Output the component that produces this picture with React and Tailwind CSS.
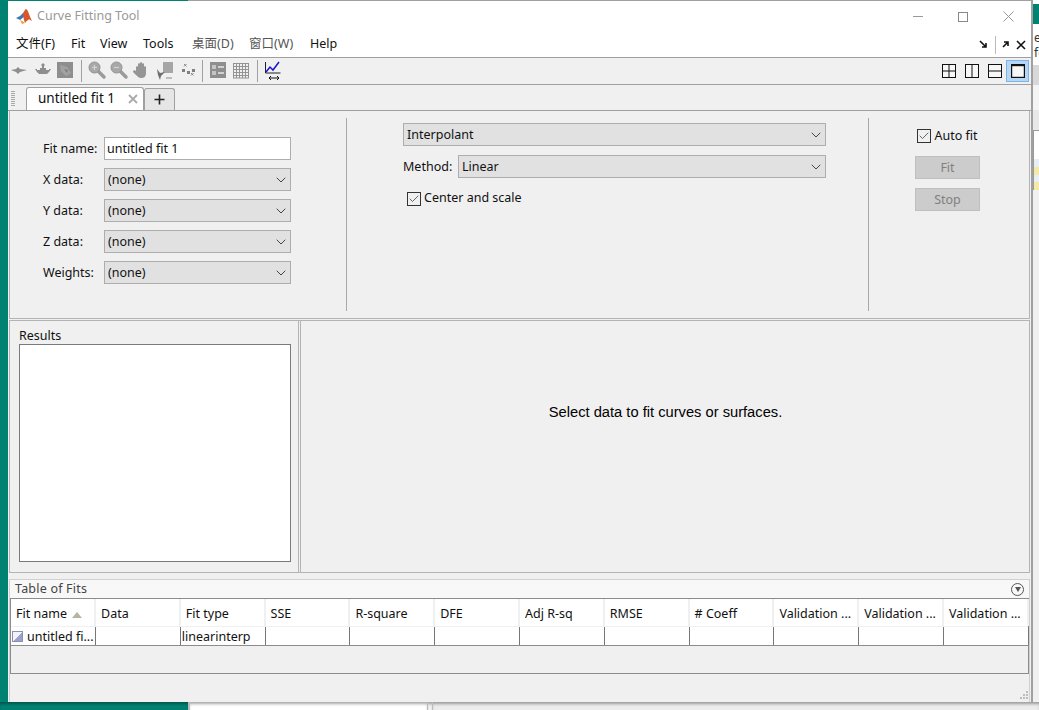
import { ChevronDown, Check } from "lucide-react";

const font = "font-['Noto_Sans','Open_Sans',sans-serif]";
const edgeShadow = "shadow-[inset_0_3px_3px_-1px_rgba(0,0,0,0.35)]";

function Combo({ text, className }) {
  return (
    <div className={`flex h-[23px] items-center justify-between border border-[#adadad] bg-[#e1e1e1] pl-[3px] pr-px ${className}`}>
      <span className="pt-[2px] leading-none">{text}</span>
      <ChevronDown size={16} strokeWidth={1.5} className="text-[#444]" />
    </div>
  );
}

function FieldRow({ label, children }) {
  return (
    <div className="flex h-[23px] items-center">
      <span className="w-[61px] pt-[2px] leading-none">{label}</span>
      {children}
    </div>
  );
}

function CheckBox() {
  return (
    <span className="flex h-[14px] w-[14px] items-center justify-center border border-[#333] bg-[#f0f0f0]">
      <Check size={12} strokeWidth={1.8} className="text-[#555]" />
    </span>
  );
}

function Sep() {
  return <span className="mx-[5px] h-[22px] w-px bg-[#a0a0a0]" />;
}

function ToolIcon({ children }) {
  return (
    <svg width="22" height="22" viewBox="0 0 22 22" className="shrink-0">
      {children}
    </svg>
  );
}

function Lens({ minus }) {
  return (
    <ToolIcon>
      <path d="M11 11l6 6" stroke="#9a9a9a" strokeWidth="3.5" strokeLinecap="round" />
      <circle cx="7.5" cy="7.5" r="5.5" fill="#a8a8a8" stroke="#929292" />
      <path d={minus ? "M5 7.5h5" : "M5 7.5h5M7.5 5v5"} stroke="#d4d4d4" strokeWidth="1.2" />
    </ToolIcon>
  );
}

function LayoutIcon({ v, h, active }) {
  return (
    <span className={`flex h-[22px] w-[23px] items-center justify-center ${active ? "border border-[#7eb4ea] bg-[#b5d7f3]" : ""}`}>
      <svg width="14" height="14" viewBox="0 0 14 14">
        <rect x="0.5" y="0.5" width="13" height="13" fill="#f7f7f7" stroke="#111" strokeWidth={active ? 1.4 : 1} />
        {active && <path d="M0 1.5h14" stroke="#111" strokeWidth="1.4" />}
        {v && <path d="M7 0v14" stroke="#111" />}
        {h && <path d="M0 7h14" stroke="#111" />}
      </svg>
    </span>
  );
}

const columns = ["Data", "Fit type", "SSE", "R-square", "DFE", "Adj R-sq", "RMSE", "# Coeff", "Validation ...", "Validation ...", "Validation ..."];

export default function App() {
  return (
    <div className={`flex h-[710px] w-[1039px] flex-col overflow-hidden bg-[#f7f7f7] text-[12.5px] text-[#111] ${font}`}>
      <div className="flex h-[702px]">
        <div className="w-2 bg-[#008272]" />

        <div className="flex w-[1023px] flex-col bg-[#f0f0f0]">
          {/* Top edge */}
          <div className="flex h-px">
            <div className="w-[180px] bg-[#008272]" />
            <div className="flex-1 bg-[#a0a0a0]" />
          </div>

          {/* Title bar */}
          <div className="flex h-[31px] items-center bg-white pl-[7px]">
            <svg width="18" height="18" viewBox="0 0 18 18">
              <path d="M1 10l4-2 3-3 2 3-5 4z" fill="#3c78b4" />
              <path d="M8 5c1-1 2-4 3-4 2 0 4 9 6 12-2-1-3-2-4-1-2 1-3 3-3 3-1-3-2-6-2-10z" fill="#d8562a" />
              <path d="M5 12c2 1 4 2 5 3l-3 1z" fill="#f09a3c" />
            </svg>
            <span className="ml-[4px] text-[12.5px] text-[#999]">Curve Fitting Tool</span>
            <div className="ml-auto flex items-center gap-[35px] pr-[17px] text-[#888]">
              <span className="h-px w-[10px] bg-[#999]" />
              <span className="h-[10px] w-[10px] border border-[#888]" />
              <svg width="11" height="11" viewBox="0 0 11 11"><path d="M0.5 0.5l10 10M10.5 0.5l-10 10" stroke="#999" /></svg>
            </div>
          </div>

          {/* Menu bar */}
          <div className="flex h-[26px] items-center border-b border-[#a0a0a0] bg-white pl-2 font-['Noto_Sans','Noto_Sans_CJK_SC',sans-serif]">
            <span className="w-[55px]">文件(F)</span>
            <span className="w-[29px]">Fit</span>
            <span className="w-[43px]">View</span>
            <span className="w-[49px]">Tools</span>
            <span className="w-[57px] text-[#555]">桌面(D)</span>
            <span className="w-[61px] text-[#555]">窗口(W)</span>
            <span>Help</span>
            <div className="ml-auto flex items-center pr-[5px]">
              <svg width="9" height="9" viewBox="0 0 9 9"><path d="M1 1l6 6M7 3v4H3" fill="none" stroke="#111" strokeWidth="1.6" /></svg>
              <span className="ml-[7px] mr-[5px] h-[18px] w-px bg-[#bbb]" />
              <svg width="9" height="9" viewBox="0 0 9 9"><path d="M2 7l5-5M3 2h4v4" fill="none" stroke="#111" strokeWidth="1.6" /></svg>
              <svg width="10" height="10" viewBox="0 0 10 10" className="ml-[6px]"><path d="M1 1l8 8M9 1l-8 8" stroke="#111" strokeWidth="1.6" /></svg>
            </div>
          </div>

          {/* Toolbar */}
          <div className="flex h-[27px] items-center border-b border-[#a0a0a0] px-[2px]">
            <div className="flex items-center">
              <ToolIcon><path d="M1 10l5-1 2-2 2 2 7 1-7 2-2 2-2-2z" fill="#8e8e8e" /></ToolIcon>
              <ToolIcon>
                <path d="M3 9h2v1h3V8h2V6l-1-1 2-2 2 2-1 1v2h2v2h3V9h2l-2 3-2 2H7l-2-2z" fill="#8e8e8e" />
              </ToolIcon>
              <ToolIcon>
                <rect x="3" y="2" width="16" height="16" fill="#8e8e8e" />
                <path d="M6 5l7 2 4 6-5 3-5-5z" fill="#a2a2a2" />
                <path d="M10 9l4 1-1 3z" fill="#7c7c7c" />
              </ToolIcon>
              <Sep />
              <Lens />
              <Lens minus />
              <ToolIcon><path d="M5 11V7c0-1 2-1 2 0V4c0-1 2-1 2 0V3c0-1 2-1 2 0v1c0-1 2-1 2 0v3c0-1 2-1 2 0v6c0 4-2 5-5 5-2 0-3-1-5-3l-3-3c0-2 2-2 3-1z" fill="#959595" /></ToolIcon>
              <ToolIcon>
                <rect x="10" y="2" width="10" height="11" fill="#a6a6a6" />
                <path d="M4 9l3 4 5-1-4 4-1 4-2-5z" fill="#6e6e6e" />
                <path d="M13 18h6" stroke="#888" />
              </ToolIcon>
              <ToolIcon>
                <g fill="#808080">
                  <rect x="7" y="9" width="3" height="3" />
                  <rect x="12" y="11" width="3" height="3" />
                  <rect x="17" y="9" width="3" height="3" />
                </g>
                <path d="M9 4l2.500 2.500M11.500 4L9 6.500M16 13l2.500 2.500M18.500 13L16 15.500" stroke="#888" />
              </ToolIcon>
              <Sep />
              <ToolIcon>
                <rect x="2" y="2" width="16" height="16" fill="#8e8e8e" />
                <path d="M4 5h4v4H4zM4 11h4v4H4z" fill="#c4c4c4" />
                <path d="M10 6h6v2h-6zM10 12h6v2h-6z" fill="#d0d0d0" />
              </ToolIcon>
              <ToolIcon>
                <path d="M3.500 3v15M6.500 3v15M9.500 3v15M12.500 3v15M15.500 3v15M18.500 3v15M3 3.500h16M3 6.500h16M3 9.500h16M3 12.500h16M3 15.500h16M3 18h16" stroke="#939393" />
              </ToolIcon>
              <Sep />
              <ToolIcon>
                <path d="M2.500 2v11h15" fill="none" stroke="#222" />
                <path d="M3 12l4-5 3 3 6-8" fill="none" stroke="#1414d0" strokeWidth="1.5" />
                <path d="M6 18h10M8 16l-2 2 2 2M14 16l2 2-2 2" fill="none" stroke="#111" />
              </ToolIcon>
            </div>
            <div className="ml-auto flex items-center">
              <LayoutIcon v h />
              <LayoutIcon v />
              <LayoutIcon h />
              <LayoutIcon active />
            </div>
          </div>

          {/* Tabs */}
          <div className="flex h-[26px] items-end border-b border-[#a0a0a0] pl-[3px]">
            <span className="mb-[4px] mr-[11px] h-[16px] w-[4px] bg-[repeating-linear-gradient(0deg,#aaa_0,#aaa_1px,transparent_1px,transparent_2px)]" />
            <div className="flex h-[23px] w-[118px] items-center justify-between rounded-t-[3px] border border-b-0 border-[#a0a0a0] bg-white pl-[11px] pr-[5px] text-[13.5px]">
              <span className="leading-none">untitled fit 1</span>
              <svg width="10" height="10" viewBox="0 0 10 10"><path d="M1 1l8 8M9 1l-8 8" stroke="#aaa" strokeWidth="1.8" /></svg>
            </div>
            <div className="flex h-[22px] w-[31px] items-center justify-center rounded-t-[3px] border border-b-0 border-[#a0a0a0] bg-[#e6e6e6]">
              <svg width="11" height="11" viewBox="0 0 11 11"><path d="M5.500 0.500v10M0.500 5.500h10" stroke="#222" strokeWidth="1.6" /></svg>
            </div>
          </div>

          {/* Fit options */}
          <div className="mx-px flex h-[208px] border-x border-b border-[#b4b4b4]">
            <div className="flex w-[336px] flex-col gap-[8px] pl-[33px] pt-[26px]">
              <FieldRow label="Fit name:">
                <div className="flex h-[23px] w-[187px] items-center border border-[#adadad] bg-white pl-[2px]">
                  <span className="pt-[2px] leading-none">untitled fit 1</span>
                </div>
              </FieldRow>
              <FieldRow label="X data:"><Combo text="(none)" className="w-[187px]" /></FieldRow>
              <FieldRow label="Y data:"><Combo text="(none)" className="w-[187px]" /></FieldRow>
              <FieldRow label="Z data:"><Combo text="(none)" className="w-[187px]" /></FieldRow>
              <FieldRow label="Weights:"><Combo text="(none)" className="w-[187px]" /></FieldRow>
            </div>
            <div className="my-[7px] w-px bg-[#a8a8a8]" />
            <div className="flex w-[521px] flex-col gap-[9px] pl-[56px] pt-[12px]">
              <Combo text="Interpolant" className="w-[423px]" />
              <div className="flex h-[23px] w-[423px] items-center">
                <span className="w-[55px] pt-[2px] leading-none">Method:</span>
                <Combo text="Linear" className="w-[368px]" />
              </div>
              <div className="mt-[5px] flex items-center gap-[3px] pl-[4px]">
                <CheckBox />
                <span className="pb-[2px] leading-none">Center and scale</span>
              </div>
            </div>
            <div className="my-[7px] w-px bg-[#a8a8a8]" />
            <div className="flex flex-1 flex-col items-center gap-[9px] pr-[3px] pt-[18px]">
              <div className="flex h-[14px] items-center gap-[3px]">
                <CheckBox />
                <span className="leading-none">Auto fit</span>
              </div>
              <div className="mt-[4px] flex h-[23px] w-[65px] items-center justify-center border border-[#bfbfbf] bg-[#cccccc] pt-px text-[#808080]">Fit</div>
              <div className="flex h-[23px] w-[65px] items-center justify-center border border-[#bfbfbf] bg-[#cccccc] pt-px text-[#808080]">Stop</div>
            </div>
          </div>

          {/* Results and plot */}
          <div className="mx-px mt-px flex h-[253px] gap-px border-x border-y border-[#b4b4b4]">
            <div className="flex w-[289px] flex-col border-r border-[#b4b4b4] px-[9px] pt-[7px]">
              <span className="h-[16px] pt-[2px] leading-none">Results</span>
              <div className="h-[218px] w-[272px] border border-[#7a7a7a] bg-white" />
            </div>
            <div className="flex flex-1 items-start justify-center border-l border-[#b4b4b4] pl-px pt-[80px] font-['Liberation_Sans',sans-serif] text-[14.7px] text-black">
              Select data to fit curves or surfaces.
            </div>
          </div>

          {/* Table of fits */}
          <div className="mx-px mt-[6px] flex flex-1 flex-col border-x border-t border-[#d0d0d0]">
            <div className="flex h-[18px] items-center justify-between bg-[#f8f8f8] px-[5px]">
              <span className="leading-none tracking-[0.2px] text-[#444]">Table of Fits</span>
              <span className="flex h-[13px] w-[13px] items-center justify-center rounded-full border border-[#555]">
                <span className="h-0 w-0 border-x-[3.5px] border-t-[5px] border-x-transparent border-t-[#555]" />
              </span>
            </div>
            <div className="h-[76px] w-[1019px] border border-[#8c8c8c]">
              <div className="grid h-[27px] grid-cols-[85px_repeat(11,84.8px)] bg-white">
                <div className="flex items-center gap-[5px] border-r-2 border-[#f0f0f0] pl-[5px] pt-[4px]">
                  Fit name
                  <span className="h-0 w-0 border-x-[5px] border-b-[6px] border-x-transparent border-b-[#b4b4a0]" />
                </div>
                {columns.map((col, i) => (
                  <div key={i} className="flex items-center whitespace-nowrap border-r-2 border-[#f0f0f0] pl-[5px] pt-[4px]">
                    {col}
                  </div>
                ))}
              </div>
              <div className="grid h-[20px] grid-cols-[85px_repeat(11,84.8px)] border-y border-b-[#8c8c8c] border-t-[#f0f0f0] bg-white">
                <div className="flex items-center gap-[4px] border-r border-[#777] pl-px">
                  <span className="h-[11px] w-[11px] border border-[#8a8fb0] bg-[linear-gradient(135deg,#f2f2f8_50%,#9aa3cf_50%)]" />
                  <span className="pt-[2px] leading-none">untitled fi...</span>
                </div>
                {columns.map((col, i) => (
                  <div key={i} className="flex items-center border-r border-[#777] pl-px pt-[2px] leading-none">
                    {i === 1 ? "linearinterp" : ""}
                  </div>
                ))}
              </div>
            </div>
            <div className="relative flex-1">
              <svg width="10" height="10" viewBox="0 0 10 10" className="absolute bottom-[2px] right-0">
                <g fill="#bdbdbd">
                  <rect x="7" y="1" width="2" height="2" />
                  <rect x="4" y="4" width="2" height="2" />
                  <rect x="7" y="4" width="2" height="2" />
                  <rect x="1" y="7" width="2" height="2" />
                  <rect x="4" y="7" width="2" height="2" />
                  <rect x="7" y="7" width="2" height="2" />
                </g>
              </svg>
            </div>
          </div>
        </div>

        {/* Window behind, right edge */}
        <div className="flex w-2 flex-col overflow-hidden border-l-2 border-[#a0a0a0] bg-white">
          <div className="mt-[4px] h-[20px] shrink-0 bg-[#008272]" />
          <div className="mt-[6px] h-[35px] shrink-0 whitespace-nowrap pl-px text-[12px] leading-[15px] text-[#333]">el<br />fo</div>
          <div className="h-[20px] shrink-0 bg-[#d8d8d8]" />
          <div className="h-[25px] shrink-0 bg-[#f4f4f4]" />
          <div className="h-[20px] shrink-0 bg-[#e8e8e8]" />
          <div className="flex h-[60px] shrink-0 flex-col border-l border-t border-[#999] pt-[28px]">
            <div className="h-[8px] bg-[#e8eef8]" />
            <div className="h-[8px] bg-[#f5e9a8]" />
            <div className="h-[8px] bg-[#e8eef8]" />
            <div className="h-[8px] bg-[#f5e9a8]" />
          </div>
          <div className="flex-1 bg-[#f0f0f0]" />
        </div>
      </div>

      {/* Bottom strip of what is behind */}
      <div className="flex h-2">
        <div className={`w-[188px] bg-[#008272] ${edgeShadow}`} />
        <div className={`w-[239px] border-l-2 border-[#bbb] bg-white ${edgeShadow}`} />
        <div className={`w-[6px] border-x border-[#bbb] bg-[#f4f4f4] ${edgeShadow}`} />
        <div className={`flex-1 bg-[#ececec] ${edgeShadow}`} />
      </div>
    </div>
  );
}
